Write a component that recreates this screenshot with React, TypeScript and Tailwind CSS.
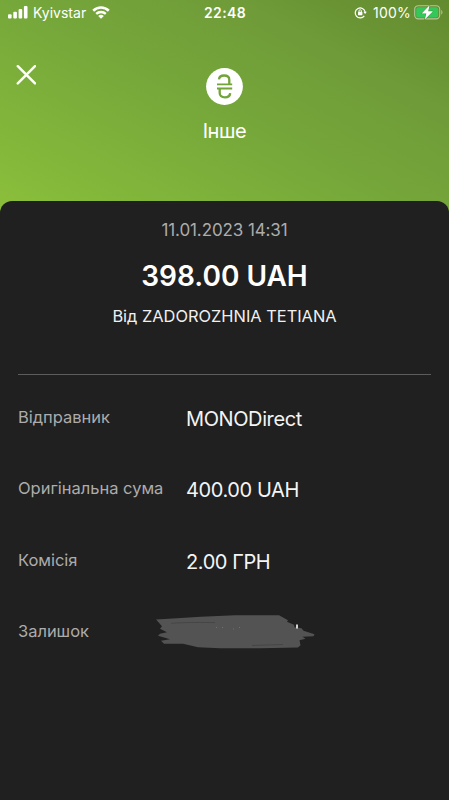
import { ReactNode } from 'react';

function StatusBar() {
  return (
    <div className="grid h-[25px] grid-cols-3 items-center pl-2 pr-1.5">
      <div className="flex items-center">
        <svg className="h-[13px] w-5" viewBox="0 0 20 13" fill="currentColor">
          <rect x="0" y="8.3" width="3.6" height="4.2" rx="1" />
          <rect x="5.3" y="5.8" width="3.6" height="6.7" rx="1" />
          <rect x="10.6" y="3" width="3.6" height="9.5" rx="1" />
          <rect x="15.9" y="0" width="3.6" height="12.5" rx="1" />
        </svg>
        <span className="ml-[5px] text-sm">Kyivstar</span>
        <svg className="ml-[6px] h-[13px] w-[18px]" viewBox="0 0 18 13">
          <path d="M1.2 4.7a11.2 11.2 0 0 1 15.6 0" fill="none" stroke="currentColor" strokeWidth="2.6" />
          <path d="M4.2 7.9a6.9 6.9 0 0 1 9.6 0" fill="none" stroke="currentColor" strokeWidth="2.4" />
          <path d="M9 12.8 6.2 10a4 4 0 0 1 5.6 0Z" fill="currentColor" />
        </svg>
      </div>
      <span className="-ml-px text-center text-sm font-semibold tracking-[0.4px]">22:48</span>
      <div className="flex items-center justify-end">
        <svg className="mr-[6px] h-[13px] w-[13px]" viewBox="0 0 13 13" fill="none" stroke="currentColor">
          <path d="M10.3 9.8a5 5 0 1 1 .8-3.8" strokeWidth="1.2" />
          <path d="M9.4 5.7h3.4l-1.7 2.4Z" fill="currentColor" stroke="none" />
          <rect x="4" y="5.8" width="4.4" height="3.4" rx="0.6" fill="currentColor" stroke="none" />
          <path d="M5 6V4.9a1.2 1.2 0 0 1 2.4 0V6" strokeWidth="0.9" />
        </svg>
        <span className="mr-[3px] text-sm tracking-[0.2px]">100%</span>
        <svg className="h-[15px] w-[29px]" viewBox="0 0 29 15">
          <rect x="0.7" y="0.7" width="25" height="13.2" rx="3.6" fill="none" stroke="#b4c79a" strokeWidth="1.1" />
          <rect x="2.2" y="2.2" width="22" height="10.2" rx="2.2" fill="#34c759" />
          <path d="M27.2 5v4.600c.8-.4 1.3-1.2 1.3-2.3S28 5.400 27.200 5Z" fill="#a9bd90" />
          <path
            d="M15.600.2 7.600 8.400h4.700L10.800 14.600l8.200-8.400h-4.800Z"
            fill="#fff"
            stroke="#477a2e"
            strokeWidth="0.8"
            paintOrder="stroke"
          />
        </svg>
      </div>
    </div>
  );
}

function HryvniaIcon() {
  return (
    <svg className="h-[37px] w-[37px]" viewBox="0 0 37 37" fill="none">
      <circle cx="18.5" cy="18.5" r="18.4" fill="#fff" />
      <g stroke="#73a43a" strokeWidth="2.3">
        <path d="M13 11.400c.2-2.500 2.100-3.900 5.100-3.900 3.300 0 5.200 1.600 5.200 4.400v4.300" />
        <path d="M24.200 25.200c-.2 2.600-2.100 4.200-5.300 4.200-3.300 0-5.200-1.600-5.200-4.500v-4.300" />
        <path d="M11 16.400h15.200M11 20.500h15.200" strokeWidth="1.9" />
      </g>
    </svg>
  );
}

function Scribble() {
  return (
    <svg className="h-9 w-[164px]" viewBox="0 0 164 36">
      <path
        d="M1 5.500 22 4.200 46 2.800l34-1.500h44l9 5-1 1.500 7 3 .5 2.500 7 1 2 2.500 11 3.500-1 2-11 .5 3 2-6 1.500 1 5-2.500 2.300-38 .7H65l-22-1-15-3.500H9l-3-3 9-1.500-12-3.500 2-2 7-1.500-7-3.500 2-2.500Z"
        fill="#535353"
      />
      <path d="M16 9.300c14-1 32-.9 44-.7M97 31.500l31-1" stroke="#444" strokeWidth="0.9" fill="none" />
      <path d="M61 13.500h1M67 13.500h1M84 13.500h1M78 15h1" stroke="#777" strokeWidth="0.8" />
      <rect x="141.200" y="10.500" width="1.600" height="4" fill="#fff" />
    </svg>
  );
}

function DetailRow({ label, children }: { label: string; children: ReactNode }) {
  return (
    <div className="flex h-[71.3px] items-start">
      <span className="w-[168px] shrink-0 text-[16.5px] leading-6 tracking-[-0.02px] text-[#acacac]">{label}</span>
      {children}
    </div>
  );
}

function Value({ children }: { children: ReactNode }) {
  return <span className="pt-0.5 text-xl leading-6 tracking-[-0.4px] text-[#f4f4f4]">{children}</span>;
}

export default function App() {
  return (
    <div className="flex h-[800px] w-[449px] flex-col overflow-hidden whitespace-nowrap bg-[#202020] font-['Inter','Liberation_Sans',sans-serif] text-white">
      {/* header runs under the sheet so its rounded corners show the gradient */}
      <header className="h-[214px] shrink-0 bg-[linear-gradient(28deg,#8bbf3a_0%,#7fb33a_25%,#75a63a_50%,#6f9b38_75%,#628a2e_100%)]">
        <StatusBar />
        <div className="grid grid-cols-3 pt-[40px]">
          <button className="ml-4 h-5 w-5 self-start" aria-label="Close">
            <svg className="h-5 w-5" viewBox="0 0 20 20" fill="none" stroke="currentColor" strokeWidth="2.5" strokeLinecap="round">
              <path d="m1.800 1.200 17.200 17.200M19 1.200 1.800 18.400" />
            </svg>
          </button>
          <div className="flex flex-col items-center pt-[3px]">
            <HryvniaIcon />
            <h1 className="mt-3 text-xl leading-7 tracking-[-0.4px]">Інше</h1>
          </div>
        </div>
      </header>

      <main className="-mt-[13px] flex-1 rounded-t-xl bg-[#202020] px-[18px]">
        <div className="flex flex-col items-center border-b border-[#5b5d5b] pb-[46px] pt-[17px]">
          <time className="text-[17px] leading-6 tracking-[-0.1px] text-[#acacac]">11.01.2023 14:31</time>
          <strong className="mt-4 text-[28px] font-semibold leading-9">398.00 UAH</strong>
          <span className="mt-[10px] text-[16.4px] leading-6 text-[#f0f0f0]">Від ZADOROZHNIA TETIANA</span>
        </div>
        <div className="pt-[30px]">
          <DetailRow label="Відправник">
            <Value>MONODirect</Value>
          </DetailRow>
          <DetailRow label="Оригінальна сума">
            <Value>400.00 UAH</Value>
          </DetailRow>
          <DetailRow label="Комісія">
            <Value>2.00 ГРН</Value>
          </DetailRow>
          <DetailRow label="Залишок">
            <div className="-ml-[31px] -mt-[5px]">
              <Scribble />
            </div>
          </DetailRow>
        </div>
      </main>
    </div>
  );
}
